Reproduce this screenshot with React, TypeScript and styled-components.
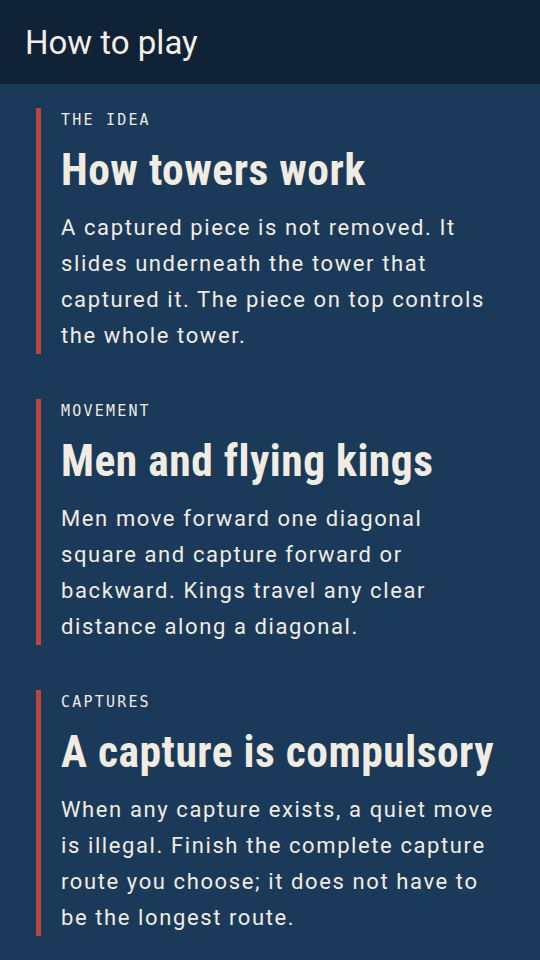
import styled, { createGlobalStyle } from "styled-components";

const GlobalStyle = createGlobalStyle`
  html, body {
    margin: 0;
    padding: 0;
    background: #1b3a5a;
  }
  * {
    box-sizing: border-box;
  }
`;

const rules: { id: string; tag: string; title: string; text: string }[] = [
  {
    id: "idea",
    tag: "The idea",
    title: "How towers work",
    text: "A captured piece is not removed. It slides underneath the tower that captured it. The piece on top controls the whole tower.",
  },
  {
    id: "movement",
    tag: "Movement",
    title: "Men and flying kings",
    text: "Men move forward one diagonal square and capture forward or backward. Kings travel any clear distance along a diagonal.",
  },
  {
    id: "captures",
    tag: "Captures",
    title: "A capture is compulsory",
    text: "When any capture exists, a quiet move is illegal. Finish the complete capture route you choose; it does not have to be the longest route.",
  },
];

const App = () => {
  return (
    <Page>
      <GlobalStyle />
      <TopBar>
        <TopTitle>How to play</TopTitle>
      </TopBar>
      <RuleList>
        {rules.map((rule) => (
          <RuleCard key={rule.id}>
            <RuleTag>{rule.tag}</RuleTag>
            <RuleTitle>{rule.title}</RuleTitle>
            <RuleText>{rule.text}</RuleText>
          </RuleCard>
        ))}
      </RuleList>
    </Page>
  );
};

export default App;

const Page = styled.div`
  min-height: 960px;
  background: #1b3a5a;
  color: #f1ece2;
  font-family: Roboto, "Noto Sans", sans-serif;
`;

const TopBar = styled.header`
  height: 84px;
  display: flex;
  align-items: center;
  padding: 0 25px;
  background: #0f2236;
`;

const TopTitle = styled.h1`
  margin: 0;
  font-size: 33px;
  font-weight: 400;
  color: #f3efe7;
`;

const RuleList = styled.main`
  display: flex;
  flex-direction: column;
  gap: 45px;
  padding: 24px 36px;
`;

const RuleCard = styled.section`
  display: flex;
  flex-direction: column;
  border-left: 5px solid #b9473d;
  padding-left: 20px;
`;

const RuleTag = styled.div`
  font-family: "DejaVu Sans Mono", "Liberation Mono", monospace;
  font-size: 15px;
  line-height: 24px;
  letter-spacing: 2.2px;
  text-transform: uppercase;
  color: #eeeae3;
  margin-bottom: 15px;
`;

const RuleTitle = styled.h2`
  margin: 0 0 15px;
  font-family: Roboto, sans-serif;
  font-stretch: 85%;
  font-size: 43.5px;
  line-height: 48px;
  font-weight: 700;
  letter-spacing: 0.5px;
  color: #f1ece2;
`;

const RuleText = styled.p`
  margin: 0;
  font-size: 22px;
  line-height: 36px;
  letter-spacing: 1.6px;
  color: #f1ece2;
`;
